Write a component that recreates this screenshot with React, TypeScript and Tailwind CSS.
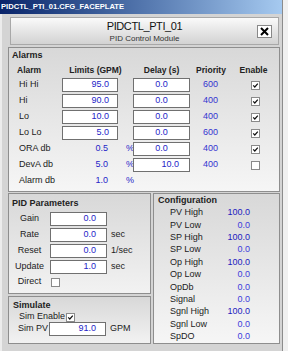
import React from "react";

function Check({ checked }: { checked: boolean }) {
  return (
    <div className="w-[9px] h-[9px] border border-[#8a8a8a] bg-white flex items-center justify-center shrink-0">
      {checked && (
        <svg width="7" height="7" viewBox="0 0 7 7">
          <path d="M1.2 3.4 L2.8 5 L5.8 1.6" stroke="#111" strokeWidth="1.2" fill="none" />
        </svg>
      )}
    </div>
  );
}

function Box({ value, w, pr, center }: { value: string; w: string; pr?: string; center?: boolean }) {
  return (
    <div
      className={`${w} h-[14px] border border-[#707070] bg-white flex items-center text-[#2424c8] ${
        center ? "justify-center" : "justify-end"
      } ${pr ?? ""}`}
    >
      {value}
    </div>
  );
}

const alarms = [
  { label: "Hi Hi", limit: "95.0", delay: "0.0", pri: "600", en: true },
  { label: "Hi", limit: "90.0", delay: "0.0", pri: "400", en: true },
  { label: "Lo", limit: "10.0", delay: "0.0", pri: "400", en: true },
  { label: "Lo Lo", limit: "5.0", delay: "0.0", pri: "600", en: true },
  { label: "ORA db", plain: "0.5", delay: "0.0", pri: "400", en: true },
  { label: "DevA db", plain: "5.0", delay: "10.0", pri: "400", en: false },
  { label: "Alarm db", plain: "1.0" },
];

const config = [
  ["PV High", "100.0"],
  ["PV Low", "0.0"],
  ["SP High", "100.0"],
  ["SP Low", "0.0"],
  ["Op High", "100.0"],
  ["Op Low", "0.0"],
  ["OpDb", "0.0"],
  ["Signal", "0.0"],
  ["Sgnl High", "100.0"],
  ["Sgnl Low", "0.0"],
  ["SpDO", "0.0"],
];

const pid = [
  ["Gain", "0.0", ""],
  ["Rate", "0.0", "sec"],
  ["Reset", "0.0", "1/sec"],
  ["Update", "1.0", "sec"],
];

export default function App() {
  return (
    <div className="w-[288px] h-[351px] flex bg-[#f0f0f0] font-['Liberation_Sans',Arial,sans-serif] text-[9px] text-[#222] overflow-hidden">
      <div className="w-[283px] h-full flex flex-col bg-[#d4d4d4] border-r border-[#8c8c8c]">
        <div className="h-[14px] shrink-0 bg-gradient-to-r from-[#0a246a] to-[#a6caf0] text-white font-bold text-[7.6px] leading-[14px] pl-[1px]">
          PIDCTL_PTI_01.CFG_FACEPLATE
        </div>
        <div className="flex-1 flex flex-col pl-[8px] pr-[2px] border-l-[2px] border-[#ececec]">
          {/* header box */}
          <div className="relative mt-[3px] ml-[0px] mr-[1px] h-[28px] shrink-0 border border-[#a8a8a8] bg-gradient-to-b from-[#fafafa] to-[#d2d2d2] flex flex-col items-center pt-[2px]">
            <div className="text-[11px] leading-[13px] tracking-[-0.4px] text-[#111]">PIDCTL_PTI_01</div>
            <div className="text-[8px] leading-[10px] mt-[1px] text-[#333]">PID Control Module</div>
            <div className="absolute right-[6px] top-[7px] w-[15px] h-[13px] bg-white border border-[#888] flex items-center justify-center">
              <svg width="9" height="9" viewBox="0 0 9 9">
                <path d="M1 1 L8 8 M8 1 L1 8" stroke="#000" strokeWidth="2" />
              </svg>
            </div>
          </div>

          {/* alarms */}
          <div className="mt-[2px] h-[145px] w-[272px] -ml-[2px] shrink-0 border border-[#8e8e8e] bg-gradient-to-b from-[#d8d8d8] to-[#f6f6f6] flex flex-col">
            <div className="h-[15px] pl-[3px] flex items-center font-bold text-[9px]">Alarms</div>
            <div className="h-[14px] flex items-center font-bold text-[8.5px]">
              <div className="w-[53px] pl-[8px]">Alarm</div>
              <div className="w-[67px] text-center">Limits (GPM)</div>
              <div className="w-[65px] text-center">Delay (s)</div>
              <div className="w-[34px] text-center">Priority</div>
              <div className="w-[51px] text-center">Enable</div>
            </div>
            {alarms.map((a) => (
              <div key={a.label} className="h-[16px] flex items-center">
                <div className="w-[53px] pl-[10px]">{a.label}</div>
                <div className="w-[56px] flex justify-end">
                  {a.limit ? (
                    <Box value={a.limit} w="w-[56px]" pr="pr-[8px]" />
                  ) : (
                    <span className="pr-[10px] text-[#2424c8]">{a.plain}</span>
                  )}
                </div>
                <div className="w-[15px] pl-[8px] text-[#2424c8]">{a.plain ? "%" : ""}</div>
                <div className="w-[57px]">
                  {a.delay && (
                    <Box value={a.delay} w="w-[57px]" center={a.delay === "0.0"} pr={a.delay === "0.0" ? "" : "pr-[10px]"} />
                  )}
                </div>
                <div className="w-[41px] text-center text-[#3434d0]">{a.pri ?? ""}</div>
                <div className="w-[48px] flex justify-center">
                  {a.en !== undefined && <Check checked={a.en} />}
                </div>
              </div>
            ))}
          </div>

          {/* bottom */}
          <div className="mt-[1px] h-[151px] w-[272px] -ml-[2px] shrink-0 flex gap-[2px]">
            <div className="w-[143px] flex flex-col gap-[2px]">
              <div className="h-[101px] border border-[#8e8e8e] bg-gradient-to-b from-[#d8d8d8] to-[#f2f2f2] flex flex-col">
                <div className="h-[17px] pt-[2px] pl-[3px] flex items-center font-bold text-[9px]">PID Parameters</div>
                {pid.map(([l, v, u]) => (
                  <div key={l} className="h-[16px] flex items-center">
                    <div className="w-[41px] text-center">{l}</div>
                    <Box value={v} w="w-[57px]" pr="pr-[10px]" />
                    <div className="pl-[4px]">{u}</div>
                  </div>
                ))}
                <div className="h-[14px] flex items-center">
                  <div className="w-[41px] text-center">Direct</div>
                  <div className="ml-[1px]">
                    <Check checked={false} />
                  </div>
                </div>
              </div>
              <div className="h-[48px] border border-[#8e8e8e] bg-gradient-to-b from-[#d8d8d8] to-[#f2f2f2] flex flex-col">
                <div className="h-[15px] pt-[2px] pl-[4px] flex items-center font-bold text-[9px]">Simulate</div>
                <div className="h-[10px] flex items-center pl-[10px]">
                  <span>Sim Enable</span>
                  <div className="ml-[1px]">
                    <Check checked={true} />
                  </div>
                </div>
                <div className="h-[14px] flex items-center">
                  <div className="w-[40px] pl-[9px]">Sim PV</div>
                  <Box value="91.0" w="w-[57px]" pr="pr-[9px]" />
                  <div className="pl-[4px]">GPM</div>
                </div>
              </div>
            </div>
            <div className="w-[127px] h-[151px] border border-[#8e8e8e] bg-gradient-to-b from-[#d8d8d8] to-[#f6f6f6] flex flex-col">
              <div className="h-[12.75px] pl-[4px] flex items-center font-bold text-[9px]">Configuration</div>
              {config.map(([l, v]) => (
                <div key={l} className="h-[12.4px] flex items-center">
                  <div className="w-[60px] pl-[16px]">{l}</div>
                  <div className={`w-[36px] text-right ${v === "0.0" ? "text-[#3c3cdc]" : "text-[#1c1cc0]"}`}>{v}</div>
                </div>
              ))}
            </div>
          </div>
        </div>
      </div>
      <div className="flex-1" />
    </div>
  );
}
